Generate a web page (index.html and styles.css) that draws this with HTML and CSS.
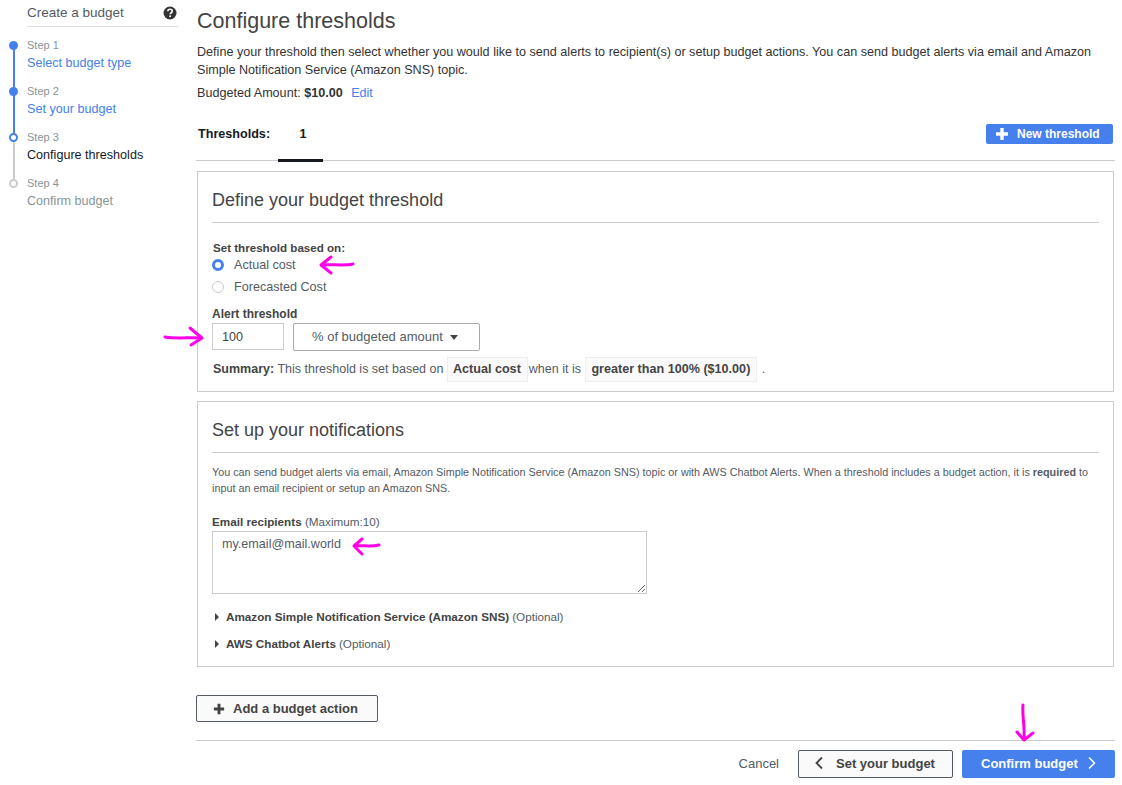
FILE: index.html
```html
<!DOCTYPE html>
<html lang="en">
<head>
<meta charset="UTF-8">
<meta name="viewport" content="width=device-width, initial-scale=1.0">
<title>Configure thresholds</title>
<link rel="stylesheet" href="styles.css">
</head>
<body>
    <aside class="sidebar">
        <div class="sidebar-title">
            <span>Create a budget</span>
            <svg class="help-icon" width="14" height="14" viewBox="0 0 14 14"><circle cx="7" cy="7" r="6.5" fill="#333"/><path d="M4.8 5.3c0-1.3 1-2.1 2.3-2.1s2.2.8 2.2 1.9c0 1.7-2 1.6-2 3.1" fill="none" stroke="#fff" stroke-width="1.6"/><rect x="6.3" y="9.4" width="1.7" height="1.7" fill="#fff"/></svg>
        </div>
        <ol class="steps">
            <li class="step done">
                <span class="step-num">Step 1</span>
                <a class="step-name">Select budget type</a>
            </li>
            <li class="step done">
                <span class="step-num">Step 2</span>
                <a class="step-name">Set your budget</a>
            </li>
            <li class="step current">
                <span class="step-num">Step 3</span>
                <a class="step-name">Configure thresholds</a>
            </li>
            <li class="step todo">
                <span class="step-num">Step 4</span>
                <a class="step-name">Confirm budget</a>
            </li>
        </ol>
    </aside>

    <main class="content">
        <h1>Configure thresholds</h1>
        <p class="intro">Define your threshold then select whether you would like to send alerts to recipient(s) or setup budget actions. You can send budget alerts via email and Amazon Simple Notification Service (Amazon SNS) topic.</p>
        <p class="budgeted">Budgeted Amount: <b>$10.00</b> <a class="edit">Edit</a></p>

        <div class="tabs">
            <span class="tabs-label">Thresholds:</span>
            <span class="tab-active">1</span>
            <button class="btn-new" type="button">
                <svg width="14" height="14" viewBox="0 0 14 14"><path d="M5.3 1h3.4v4.3H13v3.4H8.7V13H5.3V8.7H1V5.3h4.3z" fill="#fff"/></svg>
                New threshold
            </button>
        </div>

        <section class="panel panel-threshold">
            <h2>Define your budget threshold</h2>
            <div class="field-label first">Set threshold based on:</div>
            <label class="radio on"><i></i>Actual cost</label>
            <label class="radio"><i></i>Forecasted Cost</label>
            <div class="field-label alert">Alert threshold</div>
            <div class="alert-row">
                <input class="amount" type="text" value="100">
                <div class="unit-select">% of budgeted amount <span class="caret"></span></div>
            </div>
            <div class="summary">
                <b>Summary:</b> This threshold is set based on
                <span class="chip">Actual cost</span>when it is
                <span class="chip">greater than 100% ($10.00)</span> .
            </div>
        </section>

        <section class="panel panel-notify">
            <h2>Set up your notifications</h2>
            <p class="notify-text">You can send budget alerts via email, Amazon Simple Notification Service (Amazon SNS) topic or with AWS Chatbot Alerts. When a threshold includes a budget action, it is <b>required</b> to input an email recipient or setup an Amazon SNS.</p>
            <div class="field-label email"><b>Email recipients</b> <span class="hint">(Maximum:10)</span></div>
            <textarea class="emails">my.email@mail.world</textarea>
            <div class="expander sns"><span class="tri"></span><b>Amazon Simple Notification Service (Amazon SNS)</b> <span class="hint">(Optional)</span></div>
            <div class="expander chatbot"><span class="tri"></span><b>AWS Chatbot Alerts</b> <span class="hint">(Optional)</span></div>
        </section>

        <button class="btn-action" type="button">
            <svg width="12" height="12" viewBox="0 0 14 14"><path d="M5.3 1h3.4v4.3H13v3.4H8.7V13H5.3V8.7H1V5.3h4.3z" fill="#444"/></svg>
            Add a budget action
        </button>

        <div class="footer">
            <a class="cancel">Cancel</a>
            <button class="btn-back" type="button">
                <svg width="10" height="14" viewBox="0 0 10 14"><path d="M8 1.5 2.5 7 8 12.5" fill="none" stroke="#444" stroke-width="1.8"/></svg>
                Set your budget
            </button>
            <button class="btn-next" type="button">
                Confirm budget
                <svg width="10" height="14" viewBox="0 0 10 14"><path d="M2 1.5 7.5 7 2 12.5" fill="none" stroke="#fff" stroke-width="1.5"/></svg>
            </button>
        </div>
    </main>

    <!-- hand drawn annotations on top of the screenshot -->
    <svg class="marks" width="1122" height="785" viewBox="0 0 1122 785">
        <g fill="none" stroke="#ff00e6" stroke-width="3" stroke-linecap="round" stroke-linejoin="round">
            <path d="M353 264 C343 266 333 264 322 265 M331 257 L321 265 L331 273"/>
            <path d="M165 337 C178 339 190 337 201 338 M190 328 L202 338 L191 345"/>
            <path d="M379 545 C371 547 362 545 354 546 M362 539 L354 546 L362 554"/>
            <path d="M1023 705 C1022 716 1025 727 1024 739 M1017 732 L1024 740 L1033 733"/>
        </g>
    </svg>
</body>
</html>
```

FILE: styles.css
```css
*, *::before, *::after {
    box-sizing: border-box;
}

html, body {
    height: 785px;
    overflow: hidden;
}

body {
    margin: 0;
    display: flex;
    background-color: #ffffff;
    color: #444444;
    font-family: "Liberation Sans", Arial, sans-serif;
    font-size: 12.6px;
}

.sidebar {
    width: 196px;
    flex: none;
    padding-left: 27px;
    padding-right: 18px;
}

.sidebar-title {
    height: 27px;
    padding-top: 4px;
    padding-right: 1px;
    display: flex;
    justify-content: space-between;
    border-bottom: 1px solid #dddddd;
    font-size: 13.5px;
    line-height: 17px;
    color: #545b64;
}

.help-icon {
    margin-top: 2px;
}

.steps {
    list-style: none;
    margin: 10px 0 0;
    padding: 0;
}

.step {
    position: relative;
    height: 46px;
    padding-top: 1px;
}

.step::before {
    content: "";
    position: absolute;
    left: -14.5px;
    top: 8px;
    width: 2px;
    height: 46px;
    background-color: #4580ec;
}

.step::after {
    content: "";
    position: absolute;
    left: -18px;
    top: 4px;
    width: 9px;
    height: 9px;
    border-radius: 50%;
    background-color: #4580ec;
}

.step.current::before {
    background-color: #cccccc;
}

.step.current::after {
    background-color: #ffffff;
    border: 2px solid #4580ec;
}

.step.todo::before {
    display: none;
}

.step.todo::after {
    background-color: #ffffff;
    border: 2px solid #cccccc;
}

.step-num {
    display: block;
    font-size: 11px;
    line-height: 14px;
    color: #879596;
}

.step-name {
    display: block;
    margin-top: 3px;
    font-size: 12.6px;
    line-height: 17px;
    color: #4580ec;
}

.current .step-name {
    color: #16191f;
}

.todo .step-name {
    color: #879596;
}

.content {
    width: 919px;
    flex: none;
}

h1 {
    margin: 8px 0 0 1px;
    font-size: 21.5px;
    line-height: 26px;
    font-weight: normal;
    color: #444444;
}

.intro {
    margin: 9px 0 0 1px;
    line-height: 18px;
    color: #333333;
}

.budgeted {
    margin: 5px 0 0 1px;
    line-height: 18px;
    color: #333333;
}

.edit {
    margin-left: 5px;
    color: #4580ec;
}

.tabs {
    display: flex;
    align-items: center;
    height: 59px;
    border-bottom: 1px solid #cccccc;
}

.tabs-label {
    margin-left: 2px;
    margin-top: 6px;
    font-weight: bold;
    color: #16191f;
}

.tab-active {
    align-self: flex-start;
    width: 45px;
    height: 60px;
    margin-left: 8px;
    padding-top: 25px;
    padding-left: 5px;
    text-align: center;
    font-weight: bold;
    color: #16191f;
    border-bottom: 3px solid #16191f;
}

.btn-new {
    margin-left: auto;
    margin-right: 2px;
    margin-top: 6px;
    width: 127px;
    height: 20px;
    padding: 0 0 0 9px;
    display: flex;
    align-items: center;
    gap: 8px;
    border: none;
    border-radius: 2px;
    background-color: #4580ec;
    color: #ffffff;
    font: bold 12px "Liberation Sans", Arial, sans-serif;
}

.panel {
    margin: 10px 1px 0 1px;
    border: 1px solid #cccccc;
    padding: 0 14px;
}

.panel-threshold {
    height: 221px;
}

.panel-notify {
    height: 266px;
    margin-top: 9px;
}

h2 {
    margin: 0;
    height: 51px;
    padding-top: 16px;
    border-bottom: 1px solid #cccccc;
    font-size: 18px;
    line-height: 24px;
    font-weight: normal;
    color: #444444;
}

.field-label {
    font-size: 12px;
    font-weight: bold;
    line-height: 14px;
    color: #444444;
}

.field-label.first {
    margin-top: 19px;
    margin-left: 1px;
    font-size: 11.6px;
    line-height: 12px;
}

.radio {
    display: flex;
    align-items: center;
    height: 22px;
    color: #545b64;
}

.radio i {
    width: 12px;
    height: 12px;
    margin-right: 10px;
    border-radius: 50%;
    border: 1px solid #cccccc;
}

.radio.on i {
    border: 3.5px solid #4580ec;
}

.field-label.alert {
    margin-top: 10px;
    line-height: 12px;
}

.alert-row {
    display: flex;
    gap: 9px;
    margin-top: 3px;
}

.amount {
    width: 72px;
    height: 27px;
    padding: 0 9px;
    border: 1px solid #cccccc;
    font: 12.6px "Liberation Sans", Arial, sans-serif;
    color: #444444;
}

.unit-select {
    width: 187px;
    height: 28px;
    padding: 0 0 2px 18px;
    display: flex;
    align-items: center;
    border: 1px solid #aaaaaa;
    border-radius: 2px;
    font-size: 13px;
    color: #545b64;
}

.caret {
    margin: 2px 0 0 7px;
    border-left: 4.5px solid transparent;
    border-right: 4.5px solid transparent;
    border-top: 5px solid #444444;
}

.summary {
    margin-top: 5px;
    margin-left: 1px;
    height: 25px;
    font-size: 12.5px;
    line-height: 26px;
    white-space: nowrap;
    color: #545b64;
}

.summary b {
    color: #444444;
}

.chip {
    display: inline-block;
    height: 25px;
    margin-right: 1px;
    padding: 0 6px 0 5px;
    line-height: 23px;
    border: 1px solid #eeeeee;
    background-color: #fafafa;
    font-size: 12.6px;
    font-weight: bold;
    color: #444444;
}

.chip + .chip {
    margin-left: 1px;
}

.notify-text {
    margin: 11px 0 0;
    font-size: 10.8px;
    line-height: 16px;
    color: #545b64;
}

.field-label.email {
    margin-top: 19px;
    font-size: 11.7px;
}

.hint {
    font-weight: normal;
    font-size: 11.7px;
    color: #545b64;
}

.emails {
    display: block;
    width: 435px;
    height: 63px;
    margin-top: 2px;
    padding: 5px 9px;
    border: 1px solid #cccccc;
    font: 12.6px "Liberation Sans", Arial, sans-serif;
    color: #545b64;
}

.expander {
    display: flex;
    align-items: baseline;
    gap: 3px;
    height: 27px;
    font-size: 11.7px;
    color: #444444;
}

.expander.sns {
    margin-top: 16px;
}

.tri {
    width: 0;
    height: 0;
    margin: 0 4px 0 3px;
    border-top: 4px solid transparent;
    border-bottom: 4px solid transparent;
    border-left: 4px solid #444444;
}

.btn-action {
    display: flex;
    align-items: center;
    gap: 8px;
    width: 182px;
    height: 27px;
    margin-top: 28px;
    padding: 0 0 0 16px;
    border: 1px solid #545b64;
    border-radius: 2px;
    background-color: #fafafa;
    font: bold 13px "Liberation Sans", Arial, sans-serif;
    color: #444444;
}

.footer {
    display: flex;
    align-items: center;
    justify-content: flex-end;
    height: 47px;
    margin-top: 18px;
    border-top: 1px solid #cccccc;
}

.cancel {
    margin-right: 19px;
    margin-bottom: 2px;
    font-size: 13px;
    color: #545b64;
}

.btn-back {
    display: flex;
    align-items: center;
    gap: 12px;
    width: 155px;
    height: 28px;
    margin-right: 9px;
    padding: 0 0 2px 15px;
    border: 1px solid #545b64;
    border-radius: 2px;
    background-color: #fafafa;
    font: bold 13px "Liberation Sans", Arial, sans-serif;
    color: #444444;
}

.btn-next {
    display: flex;
    align-items: center;
    gap: 9px;
    width: 153px;
    height: 28px;
    padding: 0 0 2px 19px;
    border: none;
    border-radius: 2px;
    background-color: #4580ec;
    font: bold 13px "Liberation Sans", Arial, sans-serif;
    color: #ffffff;
}

.marks {
    position: absolute;
    left: 0;
    top: 0;
    pointer-events: none;
}
```
